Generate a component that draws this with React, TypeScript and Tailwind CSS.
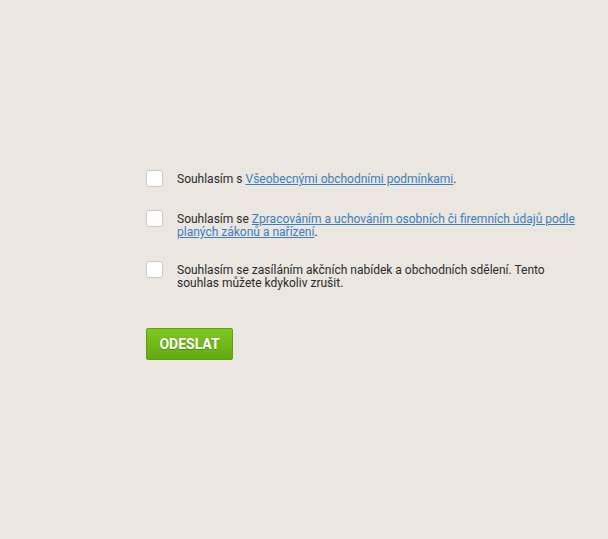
import React from "react";

function Box() {
  return (
    <span className="block w-[17px] h-[17px] shrink-0 rounded-[3px] border border-[#cfcac4] bg-white" />
  );
}

export default function App() {
  return (
    <div className="min-h-[539px] w-full bg-[#ebe6e0] font-['Roboto',sans-serif] text-[12px] leading-[13px] text-[#2b2b2b]">
      <div className="pl-[146px] pt-[170px] w-[583px]">
        <div className="flex flex-col">
          <label className="flex gap-[14px] items-start">
            <Box />
            <span className="pt-[3px]">
              Souhlasím s{" "}
              <a className="text-[#3a7fc0] underline">Všeobecnými obchodními podmínkami</a>.
            </span>
          </label>

          <label className="flex gap-[14px] items-start mt-[23px]">
            <Box />
            <span className="pt-[3px]">
              Souhlasím se{" "}
              <a className="text-[#3a7fc0] underline">
                Zpracováním a uchováním osobních či firemních údajů podle planých zákonů a nařízení
              </a>
              .
            </span>
          </label>

          <label className="flex gap-[14px] items-start mt-[22px]">
            <Box />
            <span className="pt-[3px]">
              Souhlasím se zasíláním akčních nabídek a obchodních sdělení. Tento souhlas můžete kdykoliv zrušit.
            </span>
          </label>
        </div>

        <button className="mt-[38px] w-[87px] h-[32px] rounded-[2px] border border-[#5c9e14] bg-gradient-to-b from-[#80c820] to-[#62aa14] text-white font-bold text-[14px] [text-shadow:0_1px_1px_rgba(0,0,0,0.25)]">
          ODESLAT
        </button>
      </div>
    </div>
  );
}
